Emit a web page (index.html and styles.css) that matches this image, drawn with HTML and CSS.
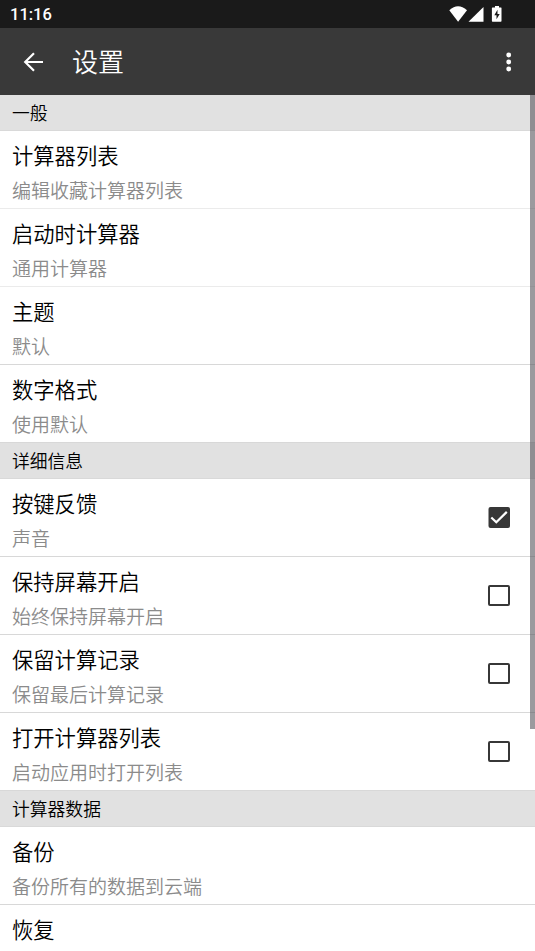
FILE: index.html
```html
<!DOCTYPE html>
<html lang="zh-CN">
<head>
<meta charset="utf-8">
<title>设置</title>
<link rel="stylesheet" href="styles.css">
</head>
<body>
<div class="status">
  <span class="time">11:16</span>
  <svg class="status-icons" width="56" height="18" viewBox="0 0 56 18" fill="#fff">
    <path d="M.3 5.200Q9-2.600 18 5.200L9.100 16.700Z"/>
    <path d="M34.500 2V16.700H19.500Z"/>
    <path fill-rule="evenodd" d="M44 2.500h2V1h4v1.500h2q.5 0 .5 .6V16q0 .7-.7 .7h-8.200q-.7 0-.7-.7V3.100q0-.6.600-.6ZM48.500 4.800L45.300 10.200h2.200v4l3.200-5.200h-2.200Z"/>
  </svg>
</div>
<header class="bar">
  <svg class="back" width="20" height="20" viewBox="0 0 20 20"><path d="M20 10H2.500M11 1.200L2.200 10l8.800 8.800" fill="none" stroke="#fff" stroke-width="2.200"/></svg>
  <h1>设置</h1>
  <svg class="more" width="6" height="20" viewBox="0 0 6 20" fill="#fff"><circle cx="2.700" cy="3" r="2.450"/><circle cx="2.700" cy="10" r="2.450"/><circle cx="2.700" cy="17" r="2.450"/></svg>
</header>
<main class="list">
  <h2>一般</h2>
  <section class="row faint"><div><h3>计算器列表</h3><p>编辑收藏计算器列表</p></div></section>
  <section class="row faint"><div><h3>启动时计算器</h3><p>通用计算器</p></div></section>
  <section class="row"><div><h3>主题</h3><p>默认</p></div></section>
  <section class="row"><div><h3>数字格式</h3><p>使用默认</p></div></section>
  <h2>详细信息</h2>
  <section class="row"><div><h3>按键反馈</h3><p>声音</p></div><svg class="check" width="22" height="21" viewBox="0 0 22 21"><rect x=".5" width="21.500" height="21" rx="2" fill="#373737"/><path d="M3.300 10.500l5 4.700L18.800 4.900" fill="none" stroke="#fff" stroke-width="2.200"/></svg></section>
  <section class="row"><div><h3>保持屏幕开启</h3><p>始终保持屏幕开启</p></div><span class="box"></span></section>
  <section class="row"><div><h3>保留计算记录</h3><p>保留最后计算记录</p></div><span class="box"></span></section>
  <section class="row"><div><h3>打开计算器列表</h3><p>启动应用时打开列表</p></div><span class="box"></span></section>
  <h2>计算器数据</h2>
  <section class="row"><div><h3>备份</h3><p>备份所有的数据到云端</p></div></section>
  <section class="row"><div><h3>恢复</h3></div></section>
  <div class="scroll"></div>
</main>
</body>
</html>
```
FILE: styles.css
```css
* { box-sizing: border-box; margin: 0; padding: 0; }
body { width: 535px; height: 951px; overflow: hidden; display: flex; flex-direction: column; background: #fff; color: #000; font-family: Roboto, "Noto Sans CJK SC", sans-serif; font-weight: 350; }
h1, h2, h3 { font-weight: 350; }
.status { flex: none; height: 28px; background: #1a1a1a; color: #fff; display: flex; align-items: center; justify-content: space-between; padding: 0 30px 0 10px; }
.time { font-size: 16.500px; font-weight: 500; line-height: 28px; padding-top: 2px; }
.bar { flex: none; height: 67px; background: #393939; color: #fff; display: flex; align-items: center; padding: 0 23px; }
.bar h1 { font-size: 26px; line-height: 38px; margin-left: 29px; padding-top: 3px; flex: 1; }
.list { position: relative; flex: 1; overflow: hidden; }
.list h2 { height: 36px; font-size: 17.800px; line-height: 37px; padding-left: 12px; background: #e1e1e1; border-bottom: 1px solid #d9d9d9; }
.row { height: 78px; border-bottom: 1px solid #d8d8d8; padding: 0 25px 0 12px; display: flex; justify-content: space-between; }
.faint { border-bottom-color: #ebebeb; }
.row h3 { font-size: 21.300px; line-height: 31px; margin-top: 10px; }
.row p { font-size: 19px; line-height: 28px; margin-top: 6px; color: #8b8b8b; }
.check, .box { width: 22px; height: 21px; margin-top: 28px; flex: none; }
.box { border: 2px solid #373737; border-radius: 2px; }
.scroll { position: absolute; right: 0; top: 0; width: 5px; height: 634px; background: rgba(88, 86, 94, .6); }
```
